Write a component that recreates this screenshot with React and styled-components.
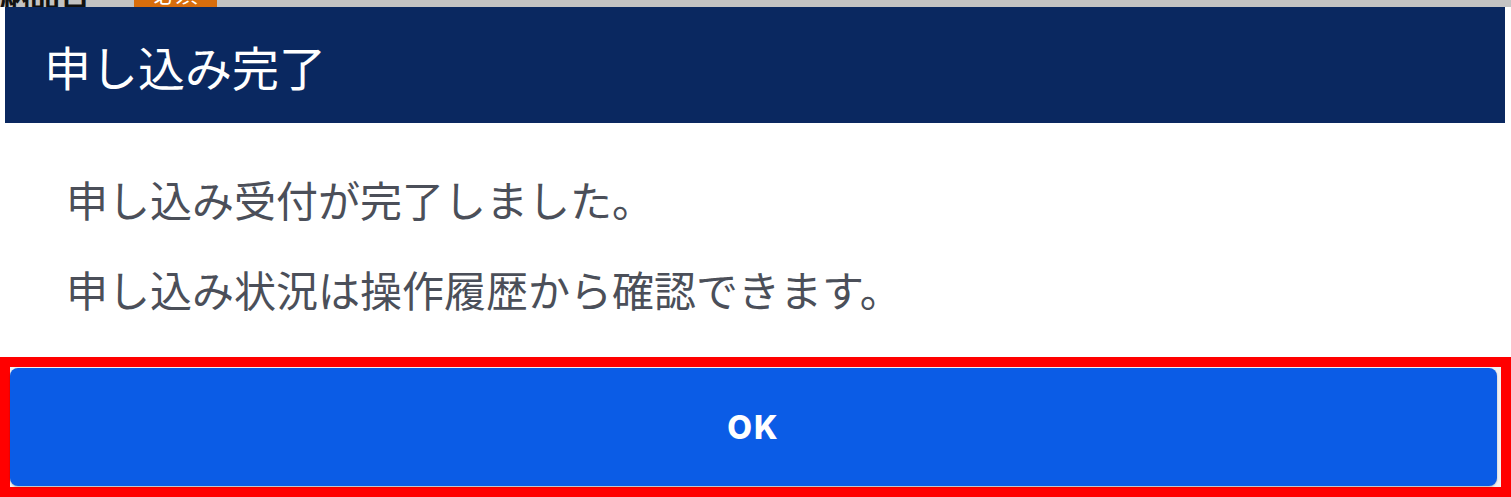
import React from "react";
import styled, { createGlobalStyle } from "styled-components";

const Global = createGlobalStyle`
  html, body { margin: 0; padding: 0; background: #ffffff; }
  body { font-family: "Noto Sans CJK JP", "Noto Sans", sans-serif; overflow: hidden; }
`;

const Page = styled.div`
  width: 1511px;
  height: 497px;
  display: flex;
  flex-direction: column;
  background: #ffffff;
`;

const BackStrip = styled.div`
  height: 7px;
  background: #c3c3c3;
  display: flex;
  align-items: flex-end;
  gap: 44px;
  overflow: hidden;
`;

const BackLabel = styled.span`
  font-size: 30px;
  line-height: 30px;
  font-weight: 700;
  color: #111;
  margin-bottom: -2px;
  white-space: nowrap;
`;

const Badge = styled.span`
  width: 83px;
  height: 30px;
  background: #d86d0c;
  color: #fff;
  font-size: 22px;
  line-height: 30px;
  text-align: center;
  flex: none;
`;

const Dialog = styled.div`
  flex: 1;
  display: flex;
  flex-direction: column;
`;

const Header = styled.div`
  margin: 0 6px 0 5px;
  height: 116px;
  background: #0a2860;
  display: flex;
  align-items: center;
  padding-left: 39px;
`;

const Title = styled.h1`
  margin: 0;
  font-size: 47px;
  font-weight: 400;
  color: #ffffff;
`;

const Body = styled.div`
  margin: 0 5px;
  padding: 50px 0 0 61px;
  height: 184px;
  box-sizing: border-box;
  display: flex;
  flex-direction: column;
  gap: 38px;
`;

const Message = styled.p`
  margin: 0;
  font-size: 42px;
  line-height: 52px;
  font-weight: 400;
  color: #4b4f59;
`;

const Highlight = styled.div`
  margin-top: auto;
  height: 140px;
  box-sizing: border-box;
  border: 10px solid #ff0000;
  background: #f2f2f2;
  padding: 1px 4px 1px 0;
  display: flex;
`;

const OkButton = styled.button`
  flex: 1;
  border: none;
  border-radius: 8px;
  background: #0b5ce6;
  box-shadow: 0 1px 2px rgba(0, 0, 0, 0.25);
  color: #ffffff;
  font-family: "Inter", "Liberation Sans", sans-serif;
  font-weight: 800;
  font-size: 32px;
  letter-spacing: 2px;
  cursor: pointer;
`;

export default function App() {
  return (
    <Page>
      <Global />
      <BackStrip>
        <BackLabel>納品日</BackLabel>
        <Badge>必須</Badge>
      </BackStrip>
      <Dialog>
        <Header>
          <Title>申し込み完了</Title>
        </Header>
        <Body>
          <Message>申し込み受付が完了しました。</Message>
          <Message>申し込み状況は操作履歴から確認できます。</Message>
        </Body>
        <Highlight>
          <OkButton>OK</OkButton>
        </Highlight>
      </Dialog>
    </Page>
  );
}
